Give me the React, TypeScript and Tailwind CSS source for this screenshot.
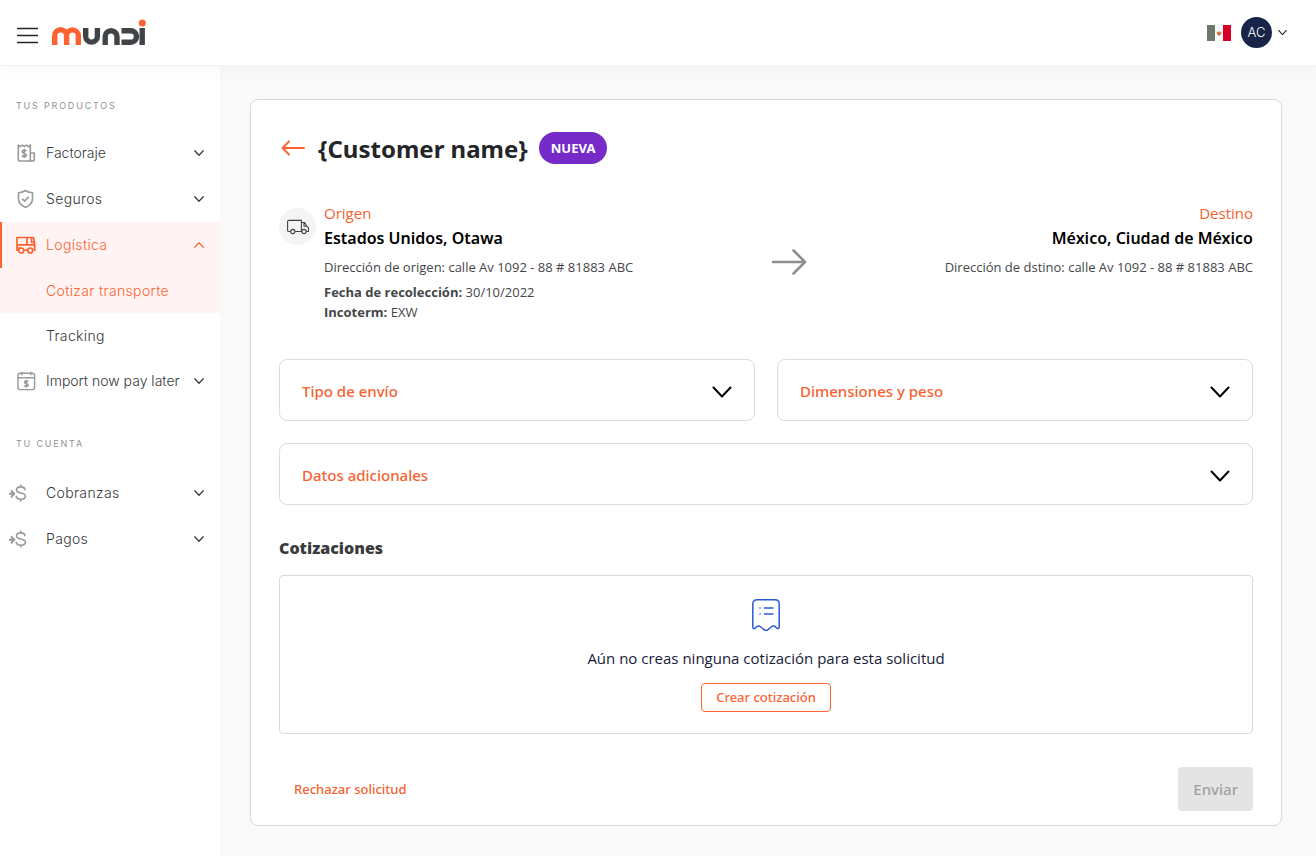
import React, { useState } from 'react';

type IconProps = { className?: string };

const Chevron: React.FC<IconProps> = ({ className }) => (
  <svg viewBox="0 0 20 20" fill="none" stroke="currentColor" strokeLinecap="round" strokeLinejoin="round" className={className} aria-hidden="true">
    <path d="M1.5 5.5 L10 14.5 L18.5 5.5" />
  </svg>
);

const InvoiceIcon = () => (
  <svg width="20" height="20" viewBox="0 0 20 20" fill="none" stroke="currentColor" strokeWidth="1.6" strokeLinejoin="round" aria-hidden="true">
    <path d="M2.3 17V2l2 1.6L6.3 2l2 1.6L10.3 2l2 1.6L14.3 2v15.5M2.3 16.2c0 1 .7 1.8 1.7 1.8h12.5c1 0 1.8-.8 1.8-1.8V10h-4v6.2c0 1 .7 1.8 1.8 1.8" />
    <path d="M10.5 8.2c-.5-.7-1.3-1-2.2-1-1.2 0-2.1.6-2.1 1.6 0 2.3 4.3 1 4.3 3.2 0 1-.9 1.6-2.2 1.6-1 0-1.9-.4-2.3-1.1M8.3 5.7v9.3" />
  </svg>
);

const ShieldIcon = () => (
  <svg width="20" height="20" viewBox="0 0 20 20" fill="none" stroke="currentColor" strokeWidth="1.6" strokeLinejoin="round" aria-hidden="true">
    <path d="M9.5 1.5c2 1.5 4.3 2.3 7 2.3v6c0 4-2.8 7-7 8.7-4.2-1.7-7-4.7-7-8.7v-6c2.7 0 5-.8 7-2.3z" />
    <path d="M6.2 9.8l2.4 2.3 4.2-4.3" />
  </svg>
);

const TruckIcon = () => (
  <svg width="20" height="20" viewBox="0 0 20 20" fill="none" stroke="currentColor" strokeWidth="1.7" strokeLinejoin="round" aria-hidden="true">
    <path d="M2 15.2H1V2.5h16.5l1.2 7v5.7h-1.2M11 2.5v7.3M1 9.8h17.7M15.5 2.5v4.8h2.8M8.3 15.2h2.9M1 13h3" />
    <circle cx="5.2" cy="15.5" r="2.5" />
    <circle cx="14.2" cy="15.5" r="2.5" />
  </svg>
);

const CalendarIcon = () => (
  <svg width="20" height="20" viewBox="0 0 20 20" fill="none" stroke="currentColor" strokeWidth="1.4" aria-hidden="true">
    <rect x="2" y="2.3" width="16.6" height="16.3" rx="2" />
    <path d="M2 6.8h16.6M5.8 .8v3.4M14.8 .8v3.4" />
    <path d="M12.3 10.9c-.4-.6-1.1-.9-2-.9-1.1 0-1.9.5-1.9 1.3 0 1.9 3.9.8 3.9 2.7 0 .9-.8 1.4-2 1.4-.9 0-1.6-.3-2-.9M10.3 8.8v7.8" />
  </svg>
);

const MoneyIcon = () => (
  <svg width="20" height="20" viewBox="0 0 20 20" fill="none" stroke="currentColor" strokeWidth="1.6" aria-hidden="true">
    <path d="M1 10.8h5M3 7.3l3.2 3.5L3 14.3" strokeWidth="2" />
    <path d="M17 7.2c0-2.2-1.7-3.3-4.3-3.3-2.5 0-4.2 1.1-4.2 3 0 4.2 9 1.8 9 6.2 0 2-1.9 3.1-4.6 3.1-2.7 0-4.7-1.2-4.700-3.400M12.800 1.500v2.500M12.800 16v2.500" />
  </svg>
);

const Logo = () => (
  <svg width="94" height="27" viewBox="0 0 94 27" fill="none" strokeWidth="5.4" role="img" aria-label="mundi">
    <path stroke="#fc6331" d="M2.7 26v-9.3a5.8 5.8 0 0 1 11.9 0V26M14.6 26v-9.3a5.8 5.8 0 0 1 11.7 0V26" />
    <g stroke="#414446">
      <path d="M33.7 9v8.3a5.8 5.8 0 0 0 11.7 0V9" />
      <path d="M53.2 26v-8.3a5.9 5.9 0 0 1 11.8 0V26" />
      <path d="M69.5 11.7h9.2a5.8 5.8 0 0 1 0 11.6h-9.2" />
      <path d="M90.2 9v17" />
    </g>
    <circle cx="90.3" cy="4" r="3.5" fill="#fc6331" />
  </svg>
);

const products = [
  { label: 'Factoraje', icon: <InvoiceIcon />, tracking: 'tracking-normal' },
  { label: 'Seguros', icon: <ShieldIcon />, tracking: 'tracking-wide' },
  { label: 'Logística', icon: <TruckIcon />, tracking: 'tracking-wide', active: true, children: ['Cotizar transporte', 'Tracking'] },
  { label: 'Import now pay later', icon: <CalendarIcon />, tracking: 'tracking-normal' },
];

const account = ['Cobranzas', 'Pagos'];

const Sidebar: React.FC = () => (
  <nav className="w-[220px] shrink-0 bg-white font-['Inter',sans-serif] text-sm font-light text-[#36383b]">
    <h2 className="pt-8 mb-4 pl-4 text-[9px] leading-4 font-normal tracking-[0.2em] text-[#8f9194]">TUS PRODUCTOS</h2>
    <ul>
      {products.map(item => (
        <li key={item.label}>
          <button
            type="button"
            aria-expanded={!!item.active}
            className={
              item.active
                ? 'flex h-[46px] w-full items-center border-l-2 border-[#fc6331] bg-[#fff4f3] pl-3.5 pr-4 text-[#fc6331]'
                : 'flex h-[46px] w-full items-center pl-4 pr-4'
            }
          >
            <span className={item.active ? 'mr-2.5' : 'mr-2.5 text-[#97999b]'}>{item.icon}</span>
            <span className={`grow text-left ${item.tracking}`}>{item.label}</span>
            <Chevron className={item.active ? 'size-2.5 rotate-180 stroke-[2.5]' : 'size-2.5 stroke-[2.5]'} />
          </button>
          {item.children && (
            <ul>
              {item.children.map((child, i) => (
                <li key={child}>
                  <a
                    href="#"
                    className={
                      i === 0
                        ? 'flex h-[45px] items-center bg-[#fff4f3] pl-[46px] tracking-wide text-[#fc6331]'
                        : 'flex h-[45px] items-center pl-[46px] tracking-wide'
                    }
                  >
                    {child}
                  </a>
                </li>
              ))}
            </ul>
          )}
        </li>
      ))}
    </ul>
    <h2 className="pt-8 mb-[18px] pl-4 text-[9px] leading-4 font-normal tracking-[0.2em] text-[#8f9194]">TU CUENTA</h2>
    <ul>
      {account.map(label => (
        <li key={label}>
          <button type="button" className="flex h-[46px] w-full items-center pl-2 pr-4">
            <span className="mr-[18px] text-[#97999b]"><MoneyIcon /></span>
            <span className="grow text-left tracking-wide">{label}</span>
            <Chevron className="size-2.5 stroke-[2.5]" />
          </button>
        </li>
      ))}
    </ul>
  </nav>
);

const Header: React.FC = () => (
  <header className="relative z-10 flex h-[66px] items-center justify-between border-b border-[#f3f3f3] bg-white pl-4 pr-[29px] shadow-[0_4px_16px_rgba(0,0,0,0.03)]">
    <div className="flex items-center gap-3">
      <button type="button" aria-label="Menú" className="pt-1">
        <svg width="24" height="20" viewBox="0 0 24 20" stroke="#242424" strokeWidth="1.6" aria-hidden="true">
          <path d="M1 3.5h21M1 10.5h21M1 17.5h21" />
        </svg>
      </button>
      <Logo />
    </div>
    <div className="flex items-center font-['Inter',sans-serif]">
      <svg width="24" height="16" viewBox="0 0 24 16" role="img" aria-label="México">
        <rect width="8" height="16" fill="#6d786b" />
        <rect x="8" width="8" height="16" fill="#fafafa" />
        <rect x="16" width="8" height="16" fill="#d80027" />
        <path d="M9.5 6.5l1.8.5.7-1 .8 1 1.8-.5-.7 3-1.9 1-1.8-1z" fill="#e2704f" />
        <path d="M10.5 9.2h3l-1.5 1.3z" fill="#5f7a55" />
      </svg>
      <button type="button" className="ml-2.5 flex items-center gap-1.5" aria-label="Cuenta AC">
        <span className="flex size-[31px] items-center justify-center rounded-full bg-[#182549] text-[13px] font-light text-white">AC</span>
        <Chevron className="size-[9px] stroke-[2.5] text-[#242424]" />
      </button>
    </div>
  </header>
);

const Panel: React.FC<{ title: string; className?: string }> = ({ title, className }) => {
  const [open, setOpen] = useState(false);
  return (
    <section className={className}>
      <button
        type="button"
        aria-expanded={open}
        onClick={() => setOpen(!open)}
        className="flex h-[62px] w-full items-center justify-between rounded-lg border border-[#dcdcdc] px-[22px] pt-[3px] text-[15px] font-medium text-[#f5622f]"
      >
        {title}
        <Chevron className="size-5 stroke-2 text-black" />
      </button>
    </section>
  );
};

const App: React.FC = () => {
  return (
    <div className="flex min-h-screen flex-col bg-[#f9f9f9] font-['Noto_Sans',sans-serif]">
      <Header />
      <div className="flex grow">
        <Sidebar />
        <main className="grow pt-[33px] pr-[34px] pb-[30px] pl-[30px]">
          <div className="rounded-lg border border-[#d9d9d9] bg-white px-7 pt-8 pb-[14px]">
            <div className="flex h-8 items-center">
              <button type="button" aria-label="Volver" className="mr-3">
                <svg width="27" height="18" viewBox="0 0 27 18" fill="none" stroke="#fc6331" strokeWidth="2" strokeLinecap="round" strokeLinejoin="round" aria-hidden="true">
                  <path d="M25 9H4M10 2.5L3.5 9 10 15.5" />
                </svg>
              </button>
              <h1 className="pt-0.5 text-2xl font-bold text-[#242528]">{'{Customer name}'}</h1>
              <span className="ml-[11px] flex h-8 items-center rounded-full bg-[#762bc8] px-3 pt-px text-[13px] font-bold text-white">NUEVA</span>
            </div>

            <div className="mt-10 flex items-start justify-between font-['Open_Sans',sans-serif] text-[13px] text-[#45464a]">
              <div className="flex">
                <span className="mt-1 mr-2 flex size-[37px] items-center justify-center rounded-full bg-[#f4f4f4]">
                  <svg width="22" height="16" viewBox="0 0 22 16" fill="none" stroke="#414248" strokeWidth="1.1" strokeLinejoin="round" aria-hidden="true">
                    <path d="M3.5 12.5H1.8c-.7 0-1.2-.5-1.2-1.2V2.6c0-.7.5-1.2 1.2-1.2h12.6v11.1H8.2M14.4 3.5h3.3l2.2 3.8 1.5 1.4v3.8h-2.2M17 3.5v3.8h2.9" />
                    <circle cx="5.8" cy="12.5" r="2.1" />
                    <circle cx="17" cy="12.5" r="2.1" />
                  </svg>
                </span>
                <div>
                  <p className="text-[15px] leading-[18px] text-[#f5622f]">Origen</p>
                  <h2 className="mt-1 font-['Noto_Sans',sans-serif] text-base leading-6 font-semibold text-black">Estados Unidos, Otawa</h2>
                  <p className="mt-[7px] leading-5">Dirección de origen: calle Av 1092 - 88 # 81883 ABC</p>
                  <p className="mt-[5px] leading-5"><strong>Fecha de recolección:</strong> 30/10/2022</p>
                  <p className="leading-5"><strong>Incoterm:</strong> EXW</p>
                </div>
              </div>
              <svg className="mt-11" width="36" height="28" viewBox="0 0 36 28" fill="none" stroke="#8e8e92" strokeWidth="2.6" strokeLinecap="round" strokeLinejoin="round" aria-hidden="true">
                <path d="M2 14h32M22.5 2.5L34 14 22.5 25.5" />
              </svg>
              <div className="text-right">
                <p className="text-[15px] leading-[18px] text-[#f5622f]">Destino</p>
                <h2 className="mt-1 font-['Noto_Sans',sans-serif] text-base leading-6 font-semibold text-black">México, Ciudad de México</h2>
                <p className="mt-[7px] leading-5">Dirección de dstino: calle Av 1092 - 88 # 81883 ABC</p>
              </div>
            </div>

            <div className="mt-[37px] grid grid-cols-2 gap-[22px]">
              <Panel title="Tipo de envío" />
              <Panel title="Dimensiones y peso" />
              <Panel title="Datos adicionales" className="col-span-2" />
            </div>

            <h2 className="mt-[31px] font-['Open_Sans',sans-serif] text-base leading-6 font-extrabold text-[#3a3b3e]">Cotizaciones</h2>
            <div className="mt-[15px] flex flex-col items-center rounded border border-[#d9d9d9] pt-[23px] pb-[21px]">
              <svg width="28" height="32" viewBox="0 0 28 32" fill="none" stroke="#2a5bd7" strokeWidth="1.5" strokeLinecap="round" strokeLinejoin="round" aria-hidden="true">
                <path d="M.8 28V5C.8 2.5 2.5.8 5 .8h18c2.5 0 4.2 1.7 4.2 4.2v23c0 1.7-1.8 2.2-2.8.8-1.3-2-3.5-2.4-5.2-.8l-3.2 2.6c-1.2 1-2.8 1-4 0L8.8 28c-1.7-1.6-3.9-1.2-5.2.8C2.6 30.2.8 29.7.8 28z" />
                <path d="M12.5 9h8.5M12.5 15h8.5M8 9h.1M8 15h.1" />
              </svg>
              <p className="mt-[15px] font-['Open_Sans',sans-serif] text-[15px] leading-6 text-[#182038]">Aún no creas ninguna cotización para esta solicitud</p>
              <button type="button" className="mt-[13px] h-[29px] rounded border border-[#fc6331] px-[14px] text-[13px] font-medium text-[#fc6331]">
                Crear cotización
              </button>
            </div>

            <div className="mt-[33px] flex items-center justify-between">
              <button type="button" className="px-[15px] pt-0.5 text-[13px] font-medium text-[#f5622f]">Rechazar solicitud</button>
              <button type="button" disabled className="h-11 rounded bg-[#e4e4e4] px-[15px] text-[15px] font-medium text-[#a0a0a0]">Enviar</button>
            </div>
          </div>
        </main>
      </div>
    </div>
  );
};

export default App;
